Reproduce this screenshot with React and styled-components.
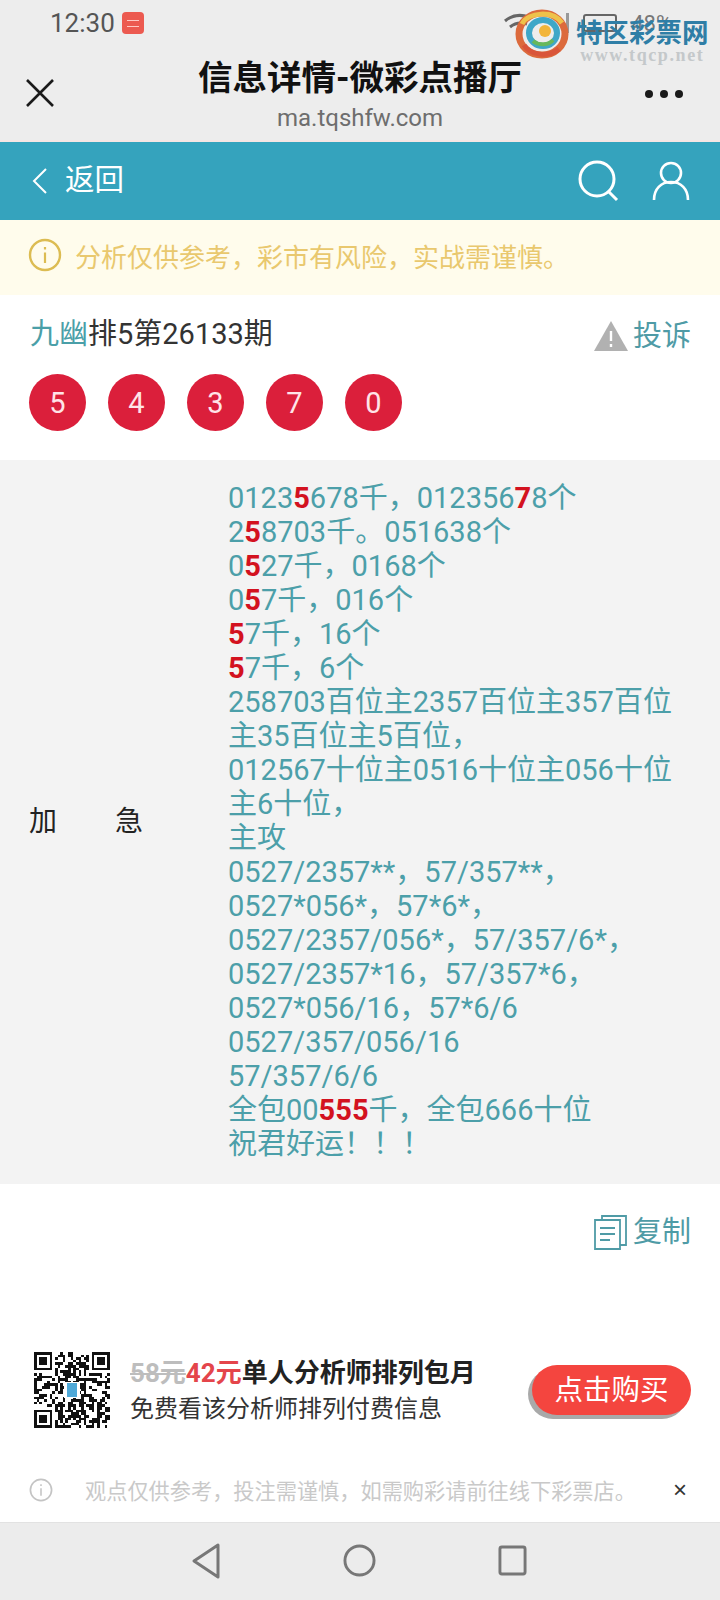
import React from "react";
import styled, { createGlobalStyle } from "styled-components";

const GlobalStyle = createGlobalStyle`
  html, body {
    margin: 0;
    padding: 0;
    background: #fff;
  }
  * {
    box-sizing: border-box;
  }
  body {
    font-family: Roboto, "Noto Sans CJK SC", sans-serif;
  }
`;

const Page = styled.div`
  position: relative;
  width: 720px;
  height: 1600px;
  display: flex;
  flex-direction: column;
  overflow: hidden;
  background: #fff;
`;

const BrowserHead = styled.div`
  height: 142px;
  flex: none;
  background: #ededed;
  border-bottom: 2px solid #f6e6e4;
`;

const StatusBar = styled.div`
  height: 46px;
  padding: 0 0 0 50px;
  display: flex;
  align-items: center;
  gap: 7px;
  color: #555;
  font-size: 26px;
`;

const ShopBadge = styled.span`
  width: 22px;
  height: 22px;
  border-radius: 4px;
  background: #ec5a50;
  display: flex;
  align-items: center;
  justify-content: center;

  &::after {
    content: "";
    width: 12px;
    height: 5px;
    border-top: 1px solid #ffc9c4;
    border-bottom: 1px solid #ffc9c4;
  }
`;

const StatusRight = styled.div`
  margin-left: auto;
  margin-right: 48px;
  display: flex;
  align-items: center;
  gap: 14px;
  color: #777;
  font-size: 22px;
`;

const SignalBar = styled.span`
  width: 3px;
  height: 20px;
  margin-left: 22px;
  background: #999;
`;

const Battery = styled.span`
  width: 34px;
  height: 18px;
  border: 2px solid #666;
  border-radius: 3px;
`;

const Watermark = styled.div`
  position: absolute;
  top: 9px;
  left: 515px;
  display: flex;
  align-items: flex-start;
  gap: 7px;
`;

const WatermarkText = styled.div`
  padding-top: 10px;
  display: flex;
  flex-direction: column;
  align-items: center;
`;

const WatermarkName = styled.span`
  color: #2f7ea6;
  font-size: 26.5px;
  line-height: 27px;
  font-weight: 700;
  white-space: nowrap;
`;

const WatermarkUrl = styled.span`
  color: #c4c8ca;
  font-family: "Liberation Serif", serif;
  font-size: 18px;
  line-height: 19px;
  letter-spacing: 1.6px;
  font-weight: 700;
  white-space: nowrap;
`;

const TitleRow = styled.div`
  height: 94px;
  display: grid;
  grid-template-columns: 80px 1fr 80px;
  align-items: start;
`;

const CloseButton = styled.div`
  padding: 32px 0 0 25px;
  color: #1a1a1a;
  line-height: 0;
`;

const TitleBlock = styled.div`
  padding-top: 10px;
  text-align: center;
`;

const Title = styled.div`
  color: #111;
  font-size: 34.5px;
  line-height: 44px;
  font-weight: 700;
  white-space: nowrap;
`;

const Domain = styled.div`
  margin-top: 4px;
  color: #6e6e6e;
  font-size: 24px;
  line-height: 28px;
`;

const MoreDots = styled.div`
  padding-top: 44px;
  padding-right: 37px;
  display: flex;
  justify-content: flex-end;
  gap: 7px;
`;

const Dot = styled.span`
  width: 8px;
  height: 8px;
  border-radius: 50%;
  background: #1a1a1a;
`;

const NavBar = styled.div`
  height: 78px;
  flex: none;
  padding: 0 30px;
  display: flex;
  align-items: center;
  background: #35a3bd;
  color: #fff;
`;

const BackLink = styled.div`
  display: flex;
  align-items: center;
  gap: 15px;
  font-size: 29.5px;
  line-height: 1;
`;

const NavIcons = styled.div`
  margin-left: auto;
  display: flex;
  align-items: center;
  gap: 32px;
`;

const Notice = styled.div`
  height: 75px;
  flex: none;
  padding: 0 28px 5px;
  display: flex;
  align-items: center;
  gap: 13px;
  background: #fffcec;
  color: #e9c86e;
  font-size: 26px;
`;

const IssueSection = styled.div`
  height: 165px;
  flex: none;
  padding: 17px 29px 0 30px;
`;

const IssueHead = styled.div`
  display: flex;
  align-items: center;
  justify-content: space-between;
  font-size: 29px;
  line-height: 44px;
  color: #333;
`;

const AuthorName = styled.span`
  color: #4a9fa8;
`;

const ActionLink = styled.div`
  display: flex;
  align-items: center;
  gap: 4px;
  color: #4f9ba6;
  font-size: 29px;
  line-height: 40px;
`;

const ComplaintLink = styled(ActionLink)`
  padding-top: 3px;
`;

const Balls = styled.div`
  margin: 18px 0 0 -1px;
  display: flex;
  gap: 22px;
`;

const Ball = styled.span`
  width: 57px;
  height: 57px;
  border-radius: 50%;
  display: flex;
  align-items: center;
  justify-content: center;
  background: #db1f3b;
  color: #ffe4e8;
  font-size: 29px;
`;

const DetailRow = styled.div`
  height: 724px;
  flex: none;
  display: flex;
  align-items: center;
  background: #f3f3f3;
`;

const DetailLabel = styled.div`
  width: 228px;
  flex: none;
  padding: 0 0 6px 29px;
  color: #222;
  font-size: 28px;
  display: flex;
  gap: 58px;
`;

const DetailBody = styled.div`
  width: 452px;
  padding-bottom: 2px;
  color: #4c9fa9;
  font-size: 29px;
  line-height: 34px;
`;

const Hit = styled.b`
  color: #d3121f;
  font-weight: 700;
`;

const CopyRow = styled.div`
  height: 151px;
  flex: none;
  padding: 28px 29px 0 30px;
  display: flex;
  justify-content: flex-end;
  align-items: flex-start;
`;

const PromoRow = styled.div`
  height: 110px;
  flex: none;
  padding: 0 29px 0 34px;
  display: flex;
  align-items: center;
  gap: 20px;
`;

const PromoText = styled.div`
  flex: 1;
  min-width: 0;
`;

const PromoTitle = styled.div`
  color: #222;
  font-size: 26px;
  line-height: 36px;
  font-weight: 700;
  white-space: nowrap;
`;

const OldPrice = styled.span`
  color: #bdbdbd;
  text-decoration: line-through;
`;

const NewPrice = styled.span`
  color: #e4454b;
`;

const PromoSub = styled.div`
  margin-top: 1px;
  color: #333;
  font-size: 24px;
  line-height: 34px;
  white-space: nowrap;
`;

const BuyButton = styled.div`
  width: 159px;
  height: 50px;
  padding-bottom: 5px;
  border-radius: 25px;
  display: flex;
  align-items: center;
  justify-content: center;
  background: #f4453f;
  box-shadow: -4px 4px 0 #a9a9a9;
  color: #fff;
  font-size: 28.5px;
`;

const Disclaimer = styled.div`
  height: 77px;
  flex: none;
  padding: 12px 33px 0 29px;
  display: flex;
  align-items: center;
  color: #c9c9c9;
  font-size: 21.2px;
`;

const DisclaimerText = styled.span`
  margin-left: 32px;
  flex: 1;
  white-space: nowrap;
`;

const DisclaimerClose = styled.span`
  color: #333;
  font-size: 24px;
  font-family: "Liberation Sans", sans-serif;
`;

const SystemNav = styled.div`
  flex: 1;
  padding: 0 193px 2px 191px;
  display: flex;
  align-items: center;
  justify-content: space-between;
  background: #ececec;
  border-top: 1px solid #e2e2e2;
  color: #777;
`;

const detailLines = [
  <>0123<Hit>5</Hit>678千，012356<Hit>7</Hit>8个</>,
  <>2<Hit>5</Hit>8703千。051638个</>,
  <>0<Hit>5</Hit>27千，0168个</>,
  <>0<Hit>5</Hit>7千，016个</>,
  <><Hit>5</Hit>7千，16个</>,
  <><Hit>5</Hit>7千，6个</>,
  <>258703百位主2357百位主357百位主35百位主5百位，</>,
  <>012567十位主0516十位主056十位主6十位，</>,
  <>主攻</>,
  <>0527/2357**，57/357**，</>,
  <>0527*056*，57*6*，</>,
  <>0527/2357/056*，57/357/6*，</>,
  <>0527/2357*16，57/357*6，</>,
  <>0527*056/16，57*6/6</>,
  <>0527/357/056/16</>,
  <>57/357/6/6</>,
  <>全包00<Hit>555</Hit>千，全包666十位</>,
  <>祝君好运！！！</>,
];

function CircleInfo({ size, color }) {
  return (
    <svg width={size} height={size} viewBox="0 0 34 34" fill="none" stroke={color}>
      <circle cx="17" cy="17" r="15" strokeWidth="2.4" />
      <path d="M17 9v2.5M17 14.5V25" strokeWidth="2.2" />
    </svg>
  );
}

function WifiIcon() {
  return (
    <svg width="26" height="22" viewBox="0 0 26 22" fill="none" stroke="#666" strokeWidth="3">
      <path d="M1 9c7-6 15-7 24-4M6 15c5-4 10-5 17-3" />
    </svg>
  );
}

function Logo() {
  return (
    <svg width="54" height="50" viewBox="0 0 54 50" fill="none">
      <ellipse cx="27" cy="25" rx="23" ry="21" stroke="#dc6a3c" strokeWidth="7" />
      <path d="M7 15C13 3 38 1 47 14" stroke="#eec24a" strokeWidth="5" />
      <path d="M9 36c6 10 24 13 35 4" stroke="#d9553a" strokeWidth="5" />
      <ellipse cx="28" cy="24" rx="14" ry="13" stroke="#3fa7c8" strokeWidth="6" />
      <path d="M18 32c6 5 16 4 20-1" stroke="#67b85c" strokeWidth="4" />
      <circle cx="30" cy="22" r="6" fill="#f2b53a" />
    </svg>
  );
}

// finder squares plus a fixed pseudo random fill
function QrCode() {
  const n = 29;
  const cells = [];
  const isFinder = (x, y) =>
    (x < 8 && y < 8) || (x > n - 9 && y < 8) || (x < 8 && y > n - 9);
  let seed = 1337;
  for (let y = 0; y < n; y++) {
    for (let x = 0; x < n; x++) {
      seed = (seed * 1103515245 + 12345) & 0x7fffffff;
      if (!isFinder(x, y) && (seed >> 16) % 100 < 52) {
        cells.push(<rect key={`${x}-${y}`} x={x} y={y} width="1" height="1" />);
      }
    }
  }
  const finder = (x, y) => (
    <g key={`f${x}-${y}`}>
      <path d={`M${x} ${y}h7v7h-7zM${x + 1} ${y + 1}v5h5v-5z`} fillRule="evenodd" />
      <rect x={x + 2} y={y + 2} width="3" height="3" />
    </g>
  );
  return (
    <svg width="76" height="76" viewBox="0 0 29 29" fill="#111" shapeRendering="crispEdges">
      {cells}
      {finder(0, 0)}
      {finder(22, 0)}
      {finder(0, 22)}
      <rect x="11.5" y="11.5" width="6" height="6" fill="#fff" />
      <rect x="12.5" y="12" width="4" height="5" fill="#4fa9d8" />
    </svg>
  );
}

function App() {
  return (
    <Page>
      <GlobalStyle />
      <BrowserHead>
        <StatusBar>
          <span>12:30</span>
          <ShopBadge />
          <StatusRight>
            <WifiIcon />
            <SignalBar />
            <Battery />
            <span>48%</span>
          </StatusRight>
        </StatusBar>
        <TitleRow>
          <CloseButton>
            <svg width="30" height="30" viewBox="0 0 30 30" stroke="currentColor" strokeWidth="2.6">
              <path d="M2 2l26 26M28 2L2 28" />
            </svg>
          </CloseButton>
          <TitleBlock>
            <Title>信息详情-微彩点播厅</Title>
            <Domain>ma.tqshfw.com</Domain>
          </TitleBlock>
          <MoreDots>
            <Dot />
            <Dot />
            <Dot />
          </MoreDots>
        </TitleRow>
      </BrowserHead>

      <Watermark>
        <Logo />
        <WatermarkText>
          <WatermarkName>特区彩票网</WatermarkName>
          <WatermarkUrl>www.tqcp.net</WatermarkUrl>
        </WatermarkText>
      </Watermark>

      <NavBar>
        <BackLink>
          <svg width="20" height="30" viewBox="0 0 20 30" fill="none" stroke="currentColor" strokeWidth="2">
            <path d="M16 3L4 15l12 12" />
          </svg>
          <span>返回</span>
        </BackLink>
        <NavIcons>
          <svg width="42" height="42" viewBox="0 0 42 42" fill="none" stroke="currentColor" strokeWidth="3">
            <circle cx="19" cy="19" r="17" />
            <path d="M30 31l9 9" />
          </svg>
          <svg width="38" height="40" viewBox="0 0 38 40" fill="none" stroke="currentColor" strokeWidth="2.6">
            <circle cx="19" cy="12" r="10" />
            <path d="M2 39c0-11 7-18 17-18s17 7 17 18" />
          </svg>
        </NavIcons>
      </NavBar>

      <Notice>
        <CircleInfo size={34} color="#dcbc52" />
        <span>分析仅供参考，彩市有风险，实战需谨慎。</span>
      </Notice>

      <IssueSection>
        <IssueHead>
          <span>
            <AuthorName>九幽</AuthorName>排5第26133期
          </span>
          <ComplaintLink>
            <svg width="36" height="32" viewBox="0 0 36 32">
              <path d="M18 1l17 30H1z" fill="#b1b1b1" />
              <path d="M18 11v10M18 24v3" stroke="#fff" strokeWidth="2.4" />
            </svg>
            <span>投诉</span>
          </ComplaintLink>
        </IssueHead>
        <Balls>
          {[5, 4, 3, 7, 0].map((num, index) => (
            <Ball key={index}>{num}</Ball>
          ))}
        </Balls>
      </IssueSection>

      <DetailRow>
        <DetailLabel>
          <span>加</span>
          <span>急</span>
        </DetailLabel>
        <DetailBody>
          {detailLines.map((line, index) => (
            <div key={index}>{line}</div>
          ))}
        </DetailBody>
      </DetailRow>

      <CopyRow>
        <ActionLink>
          <svg width="36" height="36" viewBox="0 0 36 36" fill="none" stroke="#4f9ba6" strokeWidth="1.8">
            <path d="M9 5V2h24v29h-6" />
            <path d="M2 6h25v29H2zM7 14h15M7 20h15M7 26h10" />
          </svg>
          <span>复制</span>
        </ActionLink>
      </CopyRow>

      <PromoRow>
        <QrCode />
        <PromoText>
          <PromoTitle>
            <OldPrice>58元</OldPrice>
            <NewPrice>42元</NewPrice>单人分析师排列包月
          </PromoTitle>
          <PromoSub>免费看该分析师排列付费信息</PromoSub>
        </PromoText>
        <BuyButton>点击购买</BuyButton>
      </PromoRow>

      <Disclaimer>
        <CircleInfo size={24} color="#c4c4c4" />
        <DisclaimerText>观点仅供参考，投注需谨慎，如需购彩请前往线下彩票店。</DisclaimerText>
        <DisclaimerClose>×</DisclaimerClose>
      </Disclaimer>

      <SystemNav>
        <svg width="30" height="36" viewBox="0 0 30 36" fill="none" stroke="currentColor" strokeWidth="3">
          <path d="M27 2v32L3 18z" strokeLinejoin="round" />
        </svg>
        <svg width="33" height="33" viewBox="0 0 34 34" fill="none" stroke="currentColor" strokeWidth="3">
          <circle cx="17" cy="17" r="15" />
        </svg>
        <svg width="29" height="31" viewBox="0 0 30 32" fill="none" stroke="currentColor" strokeWidth="3">
          <rect x="2" y="2" width="26" height="28" rx="2" />
        </svg>
      </SystemNav>
    </Page>
  );
}

export default App;
